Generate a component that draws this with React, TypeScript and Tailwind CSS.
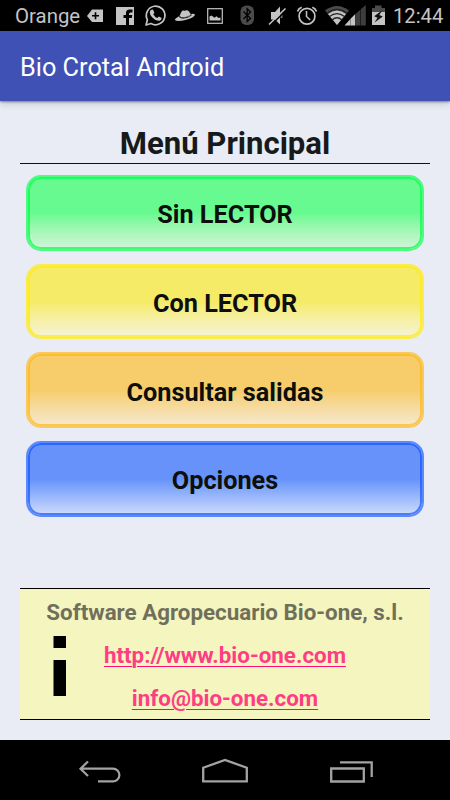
import React from 'react';

const StatusIcons: React.FC = () => (
  <>
    {/* Carrier tag */}
    <svg className="w-[24px] h-[31px]" viewBox="84 0 24 31">
      <path d="M87 16 L92 9.500 H103 V22 H92 Z" fill="#c4c4c4" />
      <path d="M92 15.800 H99 M95.500 12.300 V19.300" stroke="#000" strokeWidth="1.6" />
    </svg>
    {/* Facebook */}
    <svg className="w-[32px] h-[31px]" viewBox="108 0 32 31">
      <path d="M116 7 H134 V25 H116 Z" fill="#c4c4c4" />
      <path d="M126 25 V18 H123.500 V15 H126 V13 Q126 9.500 129.500 9.500 H132.500 V12.500 H130.500 Q129 12.500 129 14 V15 H132.300 L131.800 18 H129 V25 Z" fill="#000" />
    </svg>
    {/* WhatsApp */}
    <svg className="w-[30px] h-[31px]" viewBox="140 0 30 31">
      <path d="M146 25 L147.400 19.800 A9.300 9.300 0 1 1 151 23.500 Z" fill="none" stroke="#c4c4c4" strokeWidth="1.700" strokeLinejoin="round" />
      <path d="M151.300 9.700 L153 9.600 L154.400 12.700 L153.300 14.300 Q154.600 16.900 157.300 18.100 L158.900 16.500 L161.600 17.900 Q161.500 20.600 158.300 20.800 Q155.100 20.500 152.100 17.200 Q149.600 14.300 149.700 12.200 Q150.100 10.300 151.300 9.700 Z" fill="#c4c4c4" />
    </svg>
    {/* Hat */}
    <svg className="w-[32px] h-[31px]" viewBox="170 0 32 31">
      <path d="M179.500 16 L181.300 12 Q182.300 10 184.500 10.700 Q187.500 9.300 189 11.500 L190.800 14.200 Q191 16 187 17 Q182 18.500 179.500 16 Z" fill="#c4c4c4" />
      <path d="M179 16.200 Q174.500 18.800 175 20 Q177 22 185.500 20 Q194.500 17.500 195 14.800 Q194.600 13.500 191.200 13.900 L191.500 15.500 Q187 19 182 18.500 Q179.500 18 179 16.200 Z" fill="#c4c4c4" />
      <path d="M179.500 17 Q184 19 191.200 15" fill="none" stroke="#444" strokeWidth="0.700" />
    </svg>
    {/* Picture */}
    <svg className="w-[30px] h-[31px]" viewBox="202 0 30 31">
      <rect x="207.700" y="8.700" width="14.600" height="14.600" fill="none" stroke="#c4c4c4" strokeWidth="1.200" />
      <path d="M209.500 20.500 V16.500 L211.500 15.500 L214.500 17.800 L216.500 16.300 L218.500 18 L220.500 17.500 V20.500 Z" fill="#c4c4c4" />
    </svg>
    {/* Bluetooth */}
    <svg className="w-[30px] h-[31px]" viewBox="232 0 30 31">
      <rect x="240.500" y="5.500" width="13.500" height="19.500" rx="6" fill="#4b4b4b" />
      <path d="M243.500 11.500 L250.500 18.500 L247.200 21.500 V8.800 L250.500 12 L243.500 19" fill="none" stroke="#000" strokeWidth="1.300" />
    </svg>
    {/* Muted speaker */}
    <svg className="w-[30px] h-[31px]" viewBox="262 0 30 31">
      <path d="M271 12 H275 L280 6.500 V24.500 L275 19.500 H271 Z" fill="#c4c4c4" />
      <path d="M281.500 13.500 V18" stroke="#777" strokeWidth="2" />
      <path d="M270 26 L287 9.500" stroke="#000" strokeWidth="1.600" />
      <path d="M269 24.500 L285.500 8.500" stroke="#c4c4c4" strokeWidth="1.600" />
    </svg>
    {/* Alarm */}
    <svg className="w-[30px] h-[31px]" viewBox="292 0 30 31">
      <circle cx="307" cy="16.300" r="7.900" fill="none" stroke="#c4c4c4" strokeWidth="1.700" />
      <path d="M306.500 11 V16.500 L310.200 20" fill="none" stroke="#c4c4c4" strokeWidth="1.500" />
      <path d="M297.500 11.500 Q298.500 8.300 301.700 7.200 M316.500 11.500 Q315.500 8.300 312.300 7.200" fill="none" stroke="#c4c4c4" strokeWidth="1.700" />
    </svg>
    {/* Wifi and signal */}
    <svg className="w-[46px] h-[31px]" viewBox="322 0 46 31">
      <path d="M325 10.500 Q337 1.500 349 10.500 L337 25 Z" fill="#4b4b4b" />
      <path d="M328 14 Q337 7 346 14 L337 25 Z" fill="#c4c4c4" />
      <path d="M327 13.200 Q337 5.700 347 13.200 M329.500 16.500 Q337 10.700 344.500 16.500 M332 20 Q337 15.500 342 20" fill="none" stroke="#222" strokeWidth="1.200" />
      <path d="M344.500 25.500 L350 19.500 V25.500 Z M350.300 19 L355.300 14 V25.500 H350.300 Z" fill="#c4c4c4" />
      <path d="M356 13.500 L360.500 9.500 V25.500 H356 Z M361 9 L365.800 5 V25.500 H361 Z" fill="#3d3d3d" />
    </svg>
    {/* Charging battery */}
    <svg className="w-[22px] h-[31px]" viewBox="368 0 22 31">
      <path d="M375 5.500 H381.500 V8 H385 V12 H372 V8 H375 Z" fill="#4b4b4b" />
      <path d="M372 12 H385 V25 H372 Z" fill="#c4c4c4" />
      <path d="M382.500 10 L374.200 16.200 L377.500 17.700 L374.500 22.500 L382.800 16.500 L379.300 15 Z" fill="#111" />
    </svg>
  </>
);

const buttons = [
  {
    label: 'Sin LECTOR',
    outer: 'border-[#00ff44]/65',
    inner: 'border-[#00ff44]/70 from-[#66fa90] via-[#66fa90] to-[#d2f3da]',
  },
  {
    label: 'Con LECTOR',
    outer: 'border-[#ffeb1a]/75',
    inner: 'border-[#ffeb0a]/70 from-[#f5eb67] via-[#f5eb67] to-[#f6f3d6]',
  },
  {
    label: 'Consultar salidas',
    outer: 'border-[#ffbb22]/70',
    inner: 'border-[#ffb811]/70 from-[#f6cd6a] via-[#f6cd6a] to-[#f6e9d0]',
  },
  {
    label: 'Opciones',
    outer: 'border-[#1155ff]/65',
    inner: 'border-[#1155ff]/70 from-[#6692fa] via-[#6692fa] to-[#d0dcfa]',
  },
];

const App: React.FC = () => {
  return (
    <div className="w-[450px] h-[800px] flex flex-col overflow-hidden bg-[#e9ecf5] font-['Roboto',sans-serif]">
      {/* Status bar */}
      <div className="h-[31px] shrink-0 bg-black text-[#c4c4c4] flex items-center">
        <span className="w-[84px] pl-[15px] pt-[2px] text-[20.400px] leading-none whitespace-nowrap">Orange</span>
        <StatusIcons />
        <span className="pl-[3px] pt-[2px] text-[20.200px] leading-none">12:44</span>
      </div>

      {/* App bar */}
      <header className="h-[70px] shrink-0 bg-[#3f51b5] flex items-center px-5 shadow-[0_1px_2px_rgba(0,0,0,0.4),0_3px_7px_rgba(0,0,0,0.15)]">
        <span className="text-[25.300px] leading-none text-white pt-[4px]">Bio Crotal Android</span>
      </header>

      <main className="flex-1 flex flex-col px-5">
        <h1 className="h-[63px] shrink-0 pt-[26px] border-b border-[#111] text-center text-[31.100px] leading-[34px] font-bold text-[#171a1a]">
          Menú Principal
        </h1>

        <nav className="flex flex-col gap-[13px] px-[6px] pt-[11px]">
          {buttons.map((button) => (
            <div key={button.label} className={`h-[75.700px] rounded-[15px] border-2 ${button.outer}`}>
              <button
                className={`w-full h-full block rounded-[13px] border-2 bg-gradient-to-b bg-origin-border via-50% text-[25.250px] leading-none font-bold text-[#0c0f0c] pt-[4px] ${button.inner}`}
              >
                {button.label}
              </button>
            </div>
          ))}
        </nav>

        {/* Company details */}
        <footer className="mt-auto mb-[20px] h-[132px] border-y border-black bg-[#f5f5c0] text-center font-bold flex flex-col">
          <p className="pt-[10px] text-[22.350px] leading-[26px] text-[#70705a]">Software Agropecuario Bio-one, s.l.</p>
          <div className="flex">
            <div className="w-[33px] shrink-0"></div>
            <svg className="w-[13px] h-[60px] mt-[11px] shrink-0" viewBox="0 0 13 60">
              <path d="M0.500 0 H13 V12 H0.500 Z M0.500 24 H13 V60 H0.500 Z" fill="#000" />
            </svg>
            <div className="flex-1 flex flex-col items-center gap-[17px] pt-[17px] pr-[46px] text-[22.350px] leading-[26px] text-[#ff3d84]">
              <a className="underline underline-offset-3 decoration-[#ff0b76] decoration-1" href="#">http://www.bio-one.com</a>
              <a className="underline underline-offset-3 decoration-[#ff0b76] decoration-1" href="#">info@bio-one.com</a>
            </div>
          </div>
        </footer>
      </main>

      {/* Navigation keys */}
      <div className="h-[60px] shrink-0 bg-black flex items-center pl-[78px]">
        <svg className="w-[44px] h-[60px] mr-[79px]" viewBox="78 740 44 60" fill="none" stroke="#a3a3a3" strokeWidth="2.200">
          <path d="M88 761.500 L80.500 768.700 L88 776 M81 768.600 H113 A6.400 6.400 0 0 1 113 781.400 H98" />
        </svg>
        <svg className="w-[48px] h-[60px] mr-[80px]" viewBox="201 740 48 60" fill="none" stroke="#a3a3a3" strokeWidth="2.300">
          <path d="M203.200 781.400 V767.700 L225 760 L246.800 767.700 V781.400 Z" />
        </svg>
        <svg className="w-[44px] h-[60px]" viewBox="329 740 44 60" fill="none" stroke="#a3a3a3" strokeWidth="2.300">
          <path d="M331.200 768.500 H363.800 V781.500 H331.200 Z M340 762.400 H371.700 V777" />
        </svg>
      </div>
    </div>
  );
};

export default App;
